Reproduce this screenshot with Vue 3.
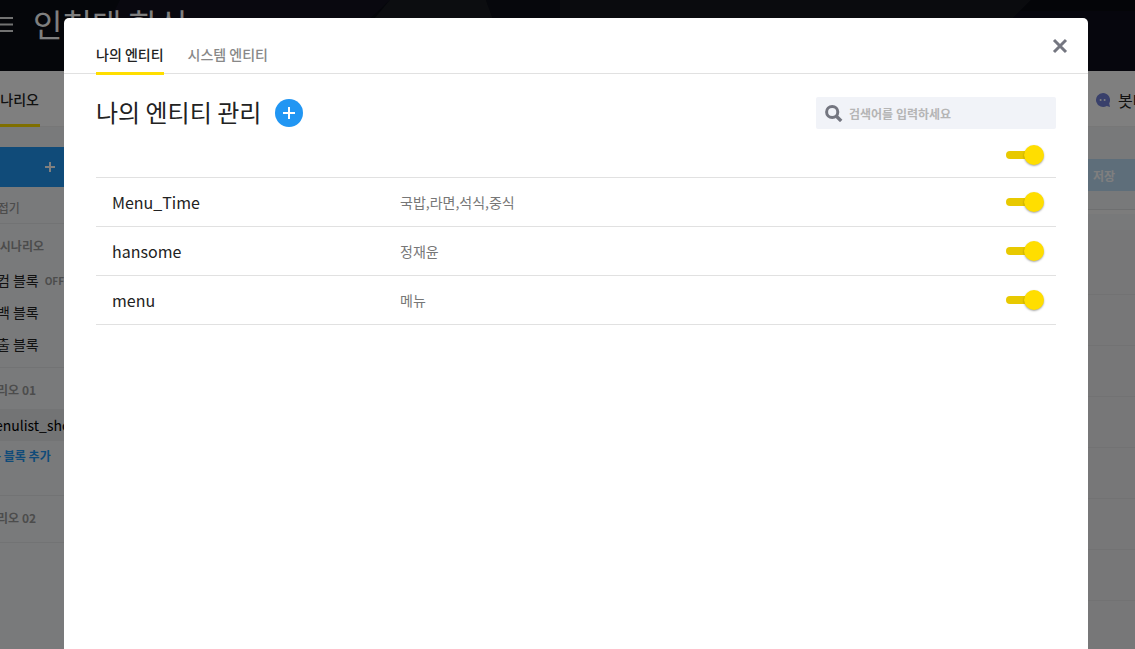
<script setup>
import { ref } from 'vue'

const allOn = ref(true)
const keyword = ref('')
const entities = ref([
  { name: 'Menu_Time', values: '국밥,라면,석식,중식', on: true },
  { name: 'hansome', values: '정재윤', on: true },
  { name: 'menu', values: '메뉴', on: true },
])
const blocks = [
  { name: '웰컴 블록', off: true },
  { name: '폴백 블록', off: false },
  { name: '탈출 블록', off: false },
]
</script>

<template>
  <div class="app">
    <div class="page" aria-hidden="true">
      <header class="top">
        <svg class="top-art" viewBox="0 0 1135 71" preserveAspectRatio="none">
          <rect width="1135" height="71" fill="#0a0c14" />
          <path d="M120 0H390L362 26V71H84Z" fill="#12101f" />
          <path d="M390 0H486L512 71H330Z" fill="#181a20" />
          <path d="M486 0H560V71H512Z" fill="#0d0f18" />
          <path d="M560 0H1031L960 71H560Z" fill="#15171c" />
          <path d="M1031 0H1135V11H1020Z" fill="#080a10" />
          <path d="M1020 11H1135V71H960Z" fill="#0d0c1b" />
        </svg>
        <svg class="burger" width="24" height="18" viewBox="0 0 24 18">
          <path d="M0 2H24M0 8.5H24M0 15H24" stroke="#e4e4e4" stroke-width="2" />
        </svg>
        <span class="bot-name">인천대 학식</span>
      </header>
      <nav class="bar">
        <a class="bar-tab" href="#">시나리오</a>
        <a class="bot-test" href="#">
          <svg width="16" height="16" viewBox="0 0 16 16">
            <path d="M8 1a7 7 0 1 0 3.8 12.9L15 15l-.8-3.6A7 7 0 0 0 8 1Z" fill="#7281d6" />
            <circle cx="5.6" cy="8" r="1" fill="#fff" />
            <circle cx="9.6" cy="8" r="1" fill="#fff" />
          </svg>
          <span>봇테스트</span>
        </a>
      </nav>
      <div class="work">
        <aside class="side">
          <button class="add-scenario" type="button" aria-label="시나리오 추가">
            <svg width="10" height="10" viewBox="0 0 10 10"><path d="M5 0V10M0 5H10" stroke="#fff" stroke-width="2" /></svg>
          </button>
          <div class="fold">모두 접기</div>
          <section class="group">
            <h3>기본 시나리오</h3>
            <a v-for="b in blocks" :key="b.name" class="block" href="#">{{ b.name }}<small v-if="b.off">OFF</small></a>
          </section>
          <section class="group second">
            <h3>시나리오 01</h3>
            <a class="block current" href="#">menulist_show</a>
            <a class="add-block" href="#">+ 블록 추가</a>
          </section>
          <section class="group third">
            <h3>시나리오 02</h3>
          </section>
        </aside>
        <main class="editor">
          <div class="editor-head"><button type="button">저장</button></div>
          <div class="strip"></div>
          <div class="cells"><div v-for="n in 9" :key="n" class="cell"></div></div>
        </main>
      </div>
    </div>

    <div class="overlay">
      <div class="modal" role="dialog" aria-modal="true" aria-labelledby="dialog-title">
        <nav class="tabs">
          <a class="tab active" href="#">나의 엔티티</a>
          <a class="tab" href="#">시스템 엔티티</a>
          <button class="close" type="button" aria-label="닫기">
            <svg width="16" height="16" viewBox="0 0 16 16"><path d="M2 2L14 14M14 2L2 14" stroke="#747680" stroke-width="3" /></svg>
          </button>
        </nav>
        <div class="body">
          <div class="heading">
            <h2 id="dialog-title">나의 엔티티 관리</h2>
            <button class="plus" type="button" aria-label="엔티티 추가">
              <svg width="12" height="12" viewBox="0 0 12 12"><path d="M6 0V12M0 6H12" stroke="#fff" stroke-width="2" /></svg>
            </button>
            <label class="search">
              <svg width="18" height="18" viewBox="0 0 18 18" fill="none" stroke="#747680">
                <circle cx="7.2" cy="8" r="5.6" stroke-width="3" />
                <path d="M11.4 12.2L16.2 17" stroke-width="3.4" />
              </svg>
              <input v-model="keyword" type="text" placeholder="검색어를 입력하세요" aria-label="검색어" />
            </label>
          </div>
          <table class="list">
            <thead>
              <tr>
                <td class="name"></td>
                <td></td>
                <td class="switch"><input v-model="allOn" type="checkbox" class="toggle" aria-label="전체" /></td>
              </tr>
            </thead>
            <tbody>
              <tr v-for="e in entities" :key="e.name">
                <td class="name">{{ e.name }}</td>
                <td class="values">{{ e.values }}</td>
                <td class="switch"><input v-model="e.on" type="checkbox" class="toggle" :aria-label="e.name" /></td>
              </tr>
            </tbody>
          </table>
        </div>
      </div>
    </div>
  </div>
</template>

<style>
body {
  overflow: hidden;
}
</style>

<style scoped>
* {
  box-sizing: border-box;
}
.app {
  position: relative;
  height: 100vh;
  overflow: hidden;
  font-family: "Noto Sans CJK KR", "Noto Sans", sans-serif;
  color: #222;
}
a {
  color: inherit;
  text-decoration: none;
}
button {
  border: 0;
  padding: 0;
  font: inherit;
  color: inherit;
  cursor: pointer;
}
svg {
  display: block;
  flex: none;
}
h2,
h3 {
  margin: 0;
}
.page {
  display: flex;
  flex-direction: column;
  height: 100%;
  background: #f3f5f7;
}
.top {
  position: relative;
  display: flex;
  align-items: flex-start;
  height: 71px;
  flex: none;
  overflow: hidden;
}
.top-art {
  position: absolute;
  inset: 0;
  width: 100%;
  height: 100%;
}
.burger {
  position: relative;
  margin: 16px 0 0 -11px;
}
.bot-name {
  position: relative;
  margin-left: 20px;
  font-size: 32px;
  line-height: 46px;
  color: #fff;
}
.bar {
  display: flex;
  justify-content: space-between;
  height: 56px;
  flex: none;
  background: #fff;
  border-bottom: 1px solid #eee;
}
.bar-tab {
  display: flex;
  justify-content: flex-end;
  width: 56px;
  margin: 0 0 -1px -16px;
  padding-right: 1px;
  border-bottom: 3px solid #ffde00;
  font-size: 14px;
  font-weight: 500;
  line-height: 56px;
  white-space: nowrap;
}
.bot-test {
  display: flex;
  align-items: center;
  gap: 7px;
  width: 40px;
  overflow: hidden;
  padding-top: 3px;
  font-size: 16px;
  white-space: nowrap;
}
.work {
  display: flex;
  flex: 1;
  min-height: 0;
}
.side {
  width: 240px;
  margin-left: -40px;
  padding-top: 20px;
  background: #f3f5f7;
}
.add-scenario {
  display: flex;
  align-items: center;
  width: 100%;
  height: 40px;
  padding-left: 85px;
  background: #2196f3;
}
.fold {
  height: 37px;
  padding: 2px 0 0 13px;
  border-bottom: 1px solid #e4e6e8;
  font-size: 12px;
  font-weight: 500;
  line-height: 38px;
  color: #999;
}
.group {
  height: 144px;
  padding-top: 8px;
  border-bottom: 1px solid #e4e6e8;
}
.group h3 {
  padding-left: 15px;
  font-size: 12px;
  font-weight: 700;
  line-height: 28px;
  color: #999;
}
.block {
  display: flex;
  align-items: center;
  gap: 6px;
  height: 32px;
  padding-left: 24px;
  font-size: 14px;
}
.group h3 + .block {
  margin-top: 4px;
}
.block small {
  font-size: 10px;
  font-weight: 700;
  color: #999;
}
.second {
  height: 128px;
}
.group h3 + .block.current {
  margin-top: 5px;
  padding-left: 22px;
  background: #e6e8ea;
  color: #000;
}
.add-block {
  display: block;
  padding-left: 34px;
  font-size: 12px;
  font-weight: 700;
  line-height: 30px;
  color: #2196f3;
}
.third {
  height: 47px;
}
.editor {
  flex: 1;
  background: #eeeff1;
}
.editor-head {
  display: flex;
  justify-content: flex-end;
  height: 83px;
  padding-top: 32px;
  border-bottom: 1px solid #dcdee0;
  background: #f1f3f5;
}
.editor-head button {
  width: 62px;
  height: 32px;
  background: #bcdcf5;
  color: #fff;
  font-size: 12px;
  font-weight: 700;
}
.strip {
  height: 20px;
  border-top: 4px solid #f8f8f8;
  background: #f1f3f5;
}
.cell {
  height: 51px;
  border-bottom: 1px solid #e4e4e6;
}
.cell:first-child {
  height: 65px;
}
.overlay {
  position: absolute;
  inset: 0;
  display: flex;
  padding: 18px 47px 0 64px;
  background: rgba(0, 0, 0, 0.5);
}
.modal {
  flex: 1;
  border-radius: 5px 5px 0 0;
  background: #fff;
}
.tabs {
  display: flex;
  gap: 24px;
  height: 56px;
  padding: 0 20px 0 32px;
  border-bottom: 1px solid #e1e1e1;
}
.tab {
  height: 57px;
  padding-top: 24px;
  font-size: 14px;
  font-weight: 500;
  line-height: 24px;
  color: #888;
}
.tab.active {
  border-bottom: 3px solid #ffde00;
  color: #222;
}
.close {
  align-self: center;
  margin-left: auto;
  background: none;
}
.body {
  padding: 23px 32px;
}
.heading {
  display: flex;
  align-items: center;
}
h2 {
  font-size: 24px;
  font-weight: 400;
  line-height: 30px;
  padding-bottom: 2px;
}
.plus {
  display: flex;
  align-items: center;
  justify-content: center;
  width: 28px;
  height: 28px;
  margin-left: 14px;
  border-radius: 50%;
  background: #2196f3;
}
.search {
  display: flex;
  align-items: center;
  gap: 6px;
  width: 240px;
  height: 32px;
  margin-left: auto;
  padding-left: 9px;
  border-radius: 2px;
  background: #f1f3f8;
}
.search input {
  flex: 1;
  min-width: 0;
  padding: 0;
  border: 0;
  outline: 0;
  background: none;
  font-family: inherit;
  font-size: 12px;
  font-weight: 700;
  color: #222;
}
.search input::placeholder {
  color: #b5b5b5;
}
.list {
  width: 100%;
  margin-top: 4px;
  border-collapse: separate;
  border-spacing: 0;
  table-layout: fixed;
}
.list td {
  height: 49px;
  padding: 0;
  border-bottom: 1px solid #e1e1e1;
  line-height: 24px;
}
.list thead td {
  height: 45px;
}
.list .name {
  width: 304px;
  padding: 0 0 0 16px;
  font-size: 16px;
}
.list .values {
  font-size: 14px;
  color: #777;
}
.list .switch {
  width: 60px;
}
.toggle {
  position: relative;
  display: block;
  appearance: none;
  width: 38px;
  height: 20px;
  margin: 0 12px 0 auto;
  cursor: pointer;
}
.toggle::before {
  content: "";
  position: absolute;
  top: 6px;
  left: 0;
  width: 30px;
  height: 8px;
  border-radius: 4px;
  background: #bbb;
}
.toggle::after {
  content: "";
  position: absolute;
  top: 0;
  left: 0;
  width: 20px;
  height: 20px;
  border-radius: 50%;
  background: #eee;
  box-shadow: 0 1px 2px rgba(0, 0, 0, 0.35);
}
.toggle:checked::before {
  background: #e8c900;
}
.toggle:checked::after {
  left: 18px;
  background: #ffde00;
}
</style>
